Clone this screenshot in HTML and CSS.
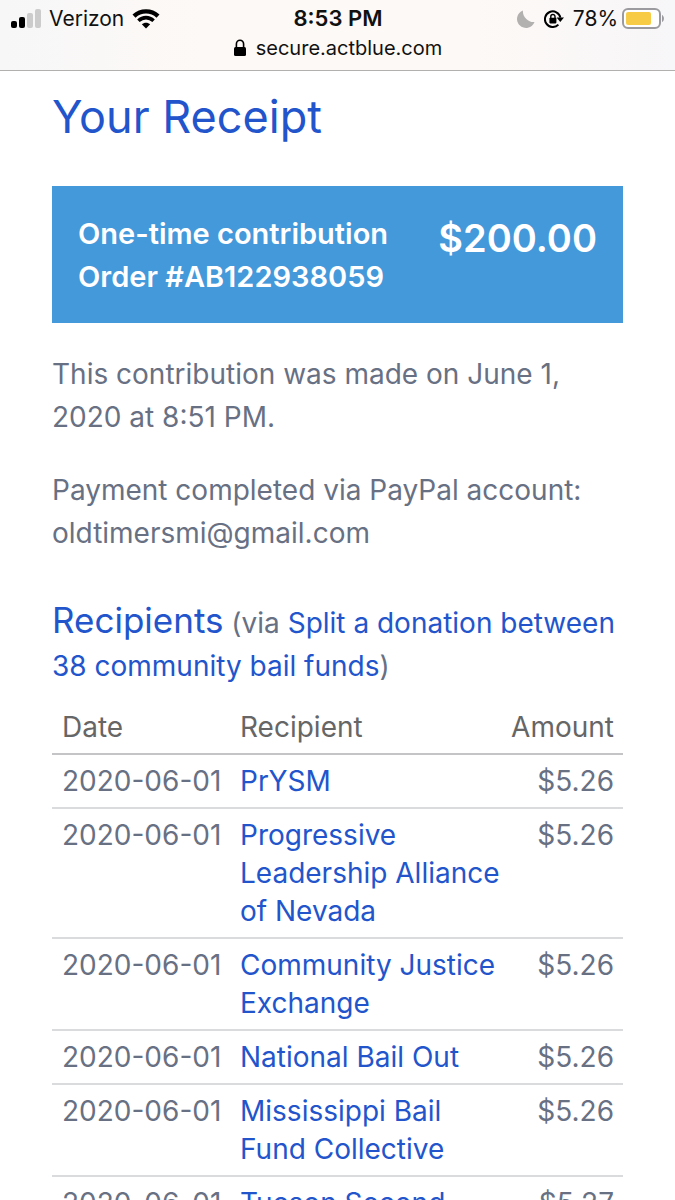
FILE: index.html
```
<!DOCTYPE html>
<html lang="en">
<head>
  <meta charset="UTF-8">
  <meta name="viewport" content="width=device-width, initial-scale=1.0">
  <title>Your Receipt</title>
  <link rel="stylesheet" href="styles.css">
</head>
<body>
  <!-- Phone status bar and address -->
  <header class="browser-bar">
    <div class="status-row">
      <div class="status-left">
        <svg class="signal" width="30" height="20" viewBox="0 0 30 20">
          <rect x="0" y="12" width="6" height="7" rx="2" fill="#000"/>
          <rect x="8" y="8" width="6" height="11" rx="2" fill="#000"/>
          <rect x="16" y="4" width="6" height="15" rx="2" fill="#ccc"/>
          <rect x="24" y="0" width="6" height="19" rx="2" fill="#ccc"/>
        </svg>
        <span>Verizon</span>
        <svg class="wifi" width="28" height="20" viewBox="0 0 28 20">
          <path d="M2 7.2C8.800 .8 19.200 .8 26 7.200" fill="none" stroke="#000" stroke-width="4.400"/>
          <path d="M6.400 11.800C10.900 7.600 17.100 7.600 21.600 11.800" fill="none" stroke="#000" stroke-width="3.600"/>
          <path d="M9.800 15.300C12 13.200 16 13.200 18.200 15.300L14 19.400Z" fill="#000"/>
        </svg>
      </div>
      <span class="clock">8:53 PM</span>
      <div class="status-right">
        <svg class="moon" width="18" height="18" viewBox="0 0 18 18">
          <path d="M6 .5A9 9 0 1 0 17.500 12C12.500 13 5 7.500 6 .5Z" fill="#b3b1b0"/>
        </svg>
        <svg class="rotation-lock" width="20" height="18" viewBox="0 0 20 18">
          <path d="M14.400 14.600A7.800 7.800 0 1 1 16.400 7.600" fill="none" stroke="#000" stroke-width="2"/>
          <path d="M12.600 7.400H20L16.300 12Z" fill="#000"/>
          <rect x="5.400" y="7.800" width="7" height="5.600" rx="0.800" fill="#000"/>
          <path d="M6.800 8.500V6.600A2.100 2.100 0 0 1 11 6.600V8.500" fill="none" stroke="#000" stroke-width="1.400"/>
        </svg>
        <span>78%</span>
        <svg class="battery" width="43" height="21" viewBox="0 0 43 21">
          <rect x="1" y="1" width="37" height="19" rx="5" fill="#fff" stroke="#9b9a9e" stroke-width="2"/>
          <rect x="4" y="4" width="25" height="13" rx="2" fill="#f7cb45"/>
          <path d="M40 7C42.600 8 42.600 13 40 14Z" fill="#9b9a9e"/>
        </svg>
      </div>
    </div>
    <div class="address">
      <svg class="lock" width="12" height="18" viewBox="0 0 12 18">
        <rect x="0" y="8" width="12" height="9" rx="1.500" fill="#000"/>
        <path d="M2.400 9V5A3.600 3.800 0 0 1 9.600 5V9" fill="none" stroke="#000" stroke-width="1.600"/>
      </svg>
      <span>secure.actblue.com</span>
    </div>
  </header>

  <main class="receipt">
    <h1>Your Receipt</h1>

    <section class="summary">
      <div class="summary-order">
        <div>One-time contribution</div>
        <div>Order #AB122938059</div>
      </div>
      <div class="summary-total">$200.00</div>
    </section>

    <p>This contribution was made on June 1, 2020 at 8:51 PM.</p>
    <p>Payment completed via PayPal account: oldtimersmi@gmail.com</p>

    <div class="recipients-heading">
      <h2>Recipients</h2>
      (via <a href="#">Split a donation between 38 community bail funds</a>)
    </div>

    <table class="recipients">
      <thead>
        <tr>
          <th class="date">Date</th>
          <th>Recipient</th>
          <th class="amount">Amount</th>
        </tr>
      </thead>
      <tbody>
        <tr>
          <td class="date">2020-06-01</td>
          <td><a href="#">PrYSM</a></td>
          <td class="amount">$5.26</td>
        </tr>
        <tr>
          <td class="date">2020-06-01</td>
          <td><a href="#">Progressive Leadership Alliance of Nevada</a></td>
          <td class="amount">$5.26</td>
        </tr>
        <tr>
          <td class="date">2020-06-01</td>
          <td><a href="#">Community Justice Exchange</a></td>
          <td class="amount">$5.26</td>
        </tr>
        <tr>
          <td class="date">2020-06-01</td>
          <td><a href="#">National Bail Out</a></td>
          <td class="amount">$5.26</td>
        </tr>
        <tr>
          <td class="date">2020-06-01</td>
          <td><a href="#">Mississippi Bail Fund Collective</a></td>
          <td class="amount">$5.26</td>
        </tr>
        <tr>
          <td class="date">2020-06-01</td>
          <td><a href="#">Tucson Second</a></td>
          <td class="amount">$5.27</td>
        </tr>
      </tbody>
    </table>
  </main>
</body>
</html>
```

FILE: styles.css
```
* {
  box-sizing: border-box;
}
body {
  margin: 0;
  height: 100vh;
  display: flex;
  flex-direction: column;
  font-family: Inter, "Liberation Sans", sans-serif;
  font-size: 28px;
  line-height: 43px;
  color: #687083;
  background-color: #fff;
}
a {
  color: #2255cc;
  text-decoration: none;
}

/* Status bar */
.browser-bar {
  flex: none;
  padding: 4px 10px 7px 11px;
  border-bottom: 1px solid #b2b0af;
  background: linear-gradient(to right, #f7f7f8, #fdf9f6 30%, #fdf9f6 70%, #f7f6f8);
  color: #111;
  font-size: 21px;
  line-height: 29px;
}
.status-row {
  display: grid;
  grid-template-columns: 1fr auto 1fr;
  align-items: center;
}
.status-left, .status-right, .address {
  display: flex;
  align-items: center;
}
.status-left {
  gap: 8px;
}
.status-right {
  justify-content: flex-end;
  gap: 9px;
}
.battery {
  margin-left: -5px;
}
.clock {
  font-size: 22px;
  font-weight: 600;
}
.address {
  justify-content: center;
  gap: 10px;
  font-size: 20px;
  line-height: 30px;
}

/* Receipt */
.receipt {
  flex: 1;
  min-height: 0;
  overflow-y: auto;
  scrollbar-width: none;
  padding: 17px 52px 0;
}
h1 {
  margin: 0 0 40px;
  font-size: 45px;
  font-weight: 400;
  line-height: 58px;
  color: #2255cc;
}
.summary {
  display: flex;
  justify-content: space-between;
  padding: 26px 26px 25px;
  background-color: #4499db;
  color: #fff;
  font-size: 29px;
  font-weight: 600;
}
.summary-total {
  font-size: 38px;
  line-height: 52px;
}
p {
  margin: 30px 0;
}
.recipients-heading {
  margin: 44px 0 13px;
}
.recipients-heading h2 {
  display: inline;
  margin: 0;
  font-size: 35px;
  font-weight: 400;
  line-height: 43px;
  color: #2255cc;
}
.recipients {
  width: 100%;
  border-collapse: collapse;
  line-height: 38px;
}
.recipients th, .recipients td {
  padding: 7px 8px 7px 10px;
  border-bottom: 2px solid #dadbdd;
  text-align: left;
  vertical-align: top;
}
.recipients th {
  border-bottom-color: #c4c4c6;
  color: #666;
  font-weight: 400;
}
.recipients .date {
  width: 178px;
  white-space: nowrap;
}
.recipients .amount {
  width: 110px;
  padding-left: 0;
  padding-right: 9px;
  text-align: right;
}
```
